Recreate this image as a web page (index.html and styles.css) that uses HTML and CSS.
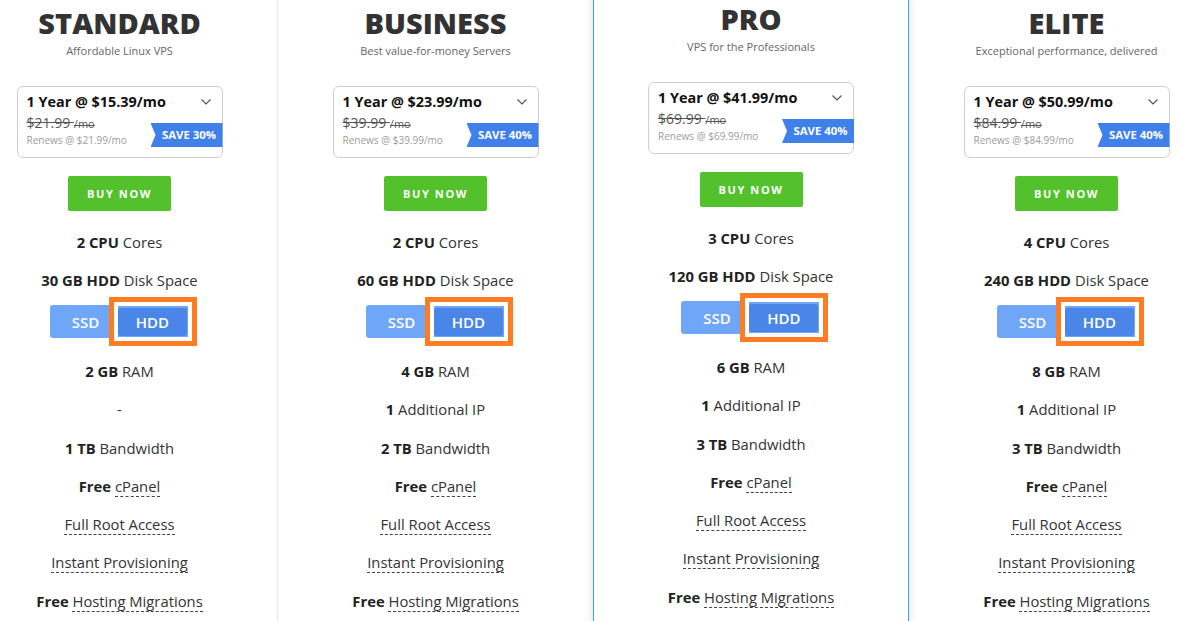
FILE: index.html
```html
<!DOCTYPE html>
<html lang="en">
<head>
<meta charset="utf-8">
<title>VPS Plans</title>
<link rel="stylesheet" href="styles.css">
</head>
<body>
<div class="plans">
  <section class="plan">
    <h2 class="plan-title">STANDARD</h2>
    <p class="plan-sub">Affordable Linux VPS</p>
    <div class="price-box">
      <div class="term">1 Year @ $15.39/mo</div>
      <svg class="chev" width="10" height="6" viewBox="0 0 10 6"><polyline points="0.5,0.5 5,5 9.5,0.5"/></svg>
      <div class="old"><s>$21.99 <small>/mo</small></s></div>
      <div class="renew">Renews @ $21.99/mo</div>
      <span class="save">SAVE 30%</span>
    </div>
    <a class="buy" href="#">BUY NOW</a>
    <ul class="features">
      <li><b>2 CPU</b> Cores</li>
      <li><b>30 GB HDD</b> Disk Space</li>
      <li class="toggle-row"><div class="toggle"><span class="opt">SSD</span><span class="opt active">HDD<span class="mark"></span></span></div></li>
      <li><b>2 GB</b> RAM</li>
      <li>-</li>
      <li><b>1 TB</b> Bandwidth</li>
      <li><b>Free</b> <span class="dotted">cPanel</span></li>
      <li><span class="dotted">Full Root Access</span></li>
      <li><span class="dotted">Instant Provisioning</span></li>
      <li><b>Free</b> <span class="dotted">Hosting Migrations</span></li>
    </ul>
  </section>
  <section class="plan">
    <h2 class="plan-title">BUSINESS</h2>
    <p class="plan-sub">Best value-for-money Servers</p>
    <div class="price-box">
      <div class="term">1 Year @ $23.99/mo</div>
      <svg class="chev" width="10" height="6" viewBox="0 0 10 6"><polyline points="0.5,0.5 5,5 9.5,0.5"/></svg>
      <div class="old"><s>$39.99 <small>/mo</small></s></div>
      <div class="renew">Renews @ $39.99/mo</div>
      <span class="save">SAVE 40%</span>
    </div>
    <a class="buy" href="#">BUY NOW</a>
    <ul class="features">
      <li><b>2 CPU</b> Cores</li>
      <li><b>60 GB HDD</b> Disk Space</li>
      <li class="toggle-row"><div class="toggle"><span class="opt">SSD</span><span class="opt active">HDD<span class="mark"></span></span></div></li>
      <li><b>4 GB</b> RAM</li>
      <li><b>1</b> Additional IP</li>
      <li><b>2 TB</b> Bandwidth</li>
      <li><b>Free</b> <span class="dotted">cPanel</span></li>
      <li><span class="dotted">Full Root Access</span></li>
      <li><span class="dotted">Instant Provisioning</span></li>
      <li><b>Free</b> <span class="dotted">Hosting Migrations</span></li>
    </ul>
  </section>
  <section class="plan featured">
    <h2 class="plan-title">PRO</h2>
    <p class="plan-sub">VPS for the Professionals</p>
    <div class="price-box">
      <div class="term">1 Year @ $41.99/mo</div>
      <svg class="chev" width="10" height="6" viewBox="0 0 10 6"><polyline points="0.5,0.5 5,5 9.5,0.5"/></svg>
      <div class="old"><s>$69.99 <small>/mo</small></s></div>
      <div class="renew">Renews @ $69.99/mo</div>
      <span class="save">SAVE 40%</span>
    </div>
    <a class="buy" href="#">BUY NOW</a>
    <ul class="features">
      <li><b>3 CPU</b> Cores</li>
      <li><b>120 GB HDD</b> Disk Space</li>
      <li class="toggle-row"><div class="toggle"><span class="opt">SSD</span><span class="opt active">HDD<span class="mark"></span></span></div></li>
      <li><b>6 GB</b> RAM</li>
      <li><b>1</b> Additional IP</li>
      <li><b>3 TB</b> Bandwidth</li>
      <li><b>Free</b> <span class="dotted">cPanel</span></li>
      <li><span class="dotted">Full Root Access</span></li>
      <li><span class="dotted">Instant Provisioning</span></li>
      <li><b>Free</b> <span class="dotted">Hosting Migrations</span></li>
    </ul>
  </section>
  <section class="plan">
    <h2 class="plan-title">ELITE</h2>
    <p class="plan-sub">Exceptional performance, delivered</p>
    <div class="price-box">
      <div class="term">1 Year @ $50.99/mo</div>
      <svg class="chev" width="10" height="6" viewBox="0 0 10 6"><polyline points="0.5,0.5 5,5 9.5,0.5"/></svg>
      <div class="old"><s>$84.99 <small>/mo</small></s></div>
      <div class="renew">Renews @ $84.99/mo</div>
      <span class="save">SAVE 40%</span>
    </div>
    <a class="buy" href="#">BUY NOW</a>
    <ul class="features">
      <li><b>4 CPU</b> Cores</li>
      <li><b>240 GB HDD</b> Disk Space</li>
      <li class="toggle-row"><div class="toggle"><span class="opt">SSD</span><span class="opt active">HDD<span class="mark"></span></span></div></li>
      <li><b>8 GB</b> RAM</li>
      <li><b>1</b> Additional IP</li>
      <li><b>3 TB</b> Bandwidth</li>
      <li><b>Free</b> <span class="dotted">cPanel</span></li>
      <li><span class="dotted">Full Root Access</span></li>
      <li><span class="dotted">Instant Provisioning</span></li>
      <li><b>Free</b> <span class="dotted">Hosting Migrations</span></li>
    </ul>
  </section>
</div>
</body>
</html>
```

FILE: styles.css
```css
html, body {
  margin: 0;
  padding: 0;
  background: #fff;
  overflow: hidden;
}
body {
  font-family: "Open Sans", "Noto Sans", "Liberation Sans", sans-serif;
  color: #333;
}
.plans {
  display: flex;
  align-items: flex-start;
  margin-left: -38px;
  width: 1300px;
}
.plan {
  flex: 0 0 316px;
  box-sizing: border-box;
  border-right: 1px solid #e6e6e6;
  display: flex;
  flex-direction: column;
  align-items: center;
  text-align: center;
  background: #fff;
  padding-top: 5px;
  min-height: 640px;
}
.plan.featured {
  margin-left: -1px;
  margin-top: -4px;
  border: 1px solid #3da2f2;
  border-top: 0;
  box-shadow: 0 0 9px rgba(0, 0, 0, 0.13);
  position: relative;
  z-index: 1;
}
.plan-title {
  margin: 0;
  font-size: 29px;
  line-height: 36px;
  font-weight: 800;
  color: #333;
}
.plan-sub {
  margin: 2px 0 0;
  font-size: 11px;
  line-height: 15px;
  color: #666;
}
.price-box {
  position: relative;
  box-sizing: border-box;
  width: 206px;
  height: 72px;
  margin-top: 28px;
  border: 1px solid #cfcfcf;
  border-radius: 6px;
  padding: 5px 0 0 9px;
  text-align: left;
}
.term {
  font-size: 14.4px;
  line-height: 19px;
  font-weight: 700;
  color: #111;
}
.chev {
  position: absolute;
  right: 11px;
  top: 12px;
  fill: none;
  stroke: #555;
  stroke-width: 1.2;
}
.old {
  margin-top: 2px;
  font-size: 14px;
  line-height: 19px;
  color: #555;
}
.old small {
  font-size: 11px;
}
.renew {
  font-size: 10px;
  line-height: 14px;
  color: #9c9c9c;
}
.save {
  position: absolute;
  right: -1px;
  top: 36px;
  width: 72px;
  height: 24px;
  box-sizing: border-box;
  padding-left: 5px;
  background: #3f80ea;
  color: #fff;
  font-size: 11.4px;
  font-weight: 700;
  line-height: 24px;
  text-align: center;
  white-space: nowrap;
  clip-path: polygon(0 0, 100% 0, 100% 100%, 0 100%, 5px 50%);
}
.buy {
  display: block;
  margin-top: 18px;
  width: 103px;
  height: 35px;
  line-height: 35px;
  background: #53c12c;
  color: #fff;
  font-size: 11px;
  font-weight: 700;
  letter-spacing: 1.6px;
  text-decoration: none;
  border-radius: 2px;
}
.features {
  list-style: none;
  margin: 12px 0 0;
  padding: 0;
  font-size: 14.8px;
  line-height: 38.25px;
  color: #333;
}
.features b {
  font-weight: 700;
  color: #222;
}
.dotted {
  border-bottom: 1px dashed #444;
}
.toggle-row {
  line-height: normal;
  display: flex;
  justify-content: center;
  padding: 5px 0 14.5px;
}
.toggle {
  display: flex;
  padding: 3px 2px 2px 3px;
  background: #6fa6f7;
  border-radius: 3px;
}
.opt {
  position: relative;
  width: 65px;
  height: 28px;
  line-height: 28px;
  color: #fff;
  font-size: 15px;
  font-weight: 600;
  text-align: center;
  border-radius: 3px;
}
.opt.active {
  width: 69px;
  background: #4a86e8;
}
.mark {
  position: absolute;
  top: -11px;
  left: -9px;
  right: -10px;
  bottom: -10px;
  border: 5px solid #ff7d22;
  box-shadow: inset 0 0 0 4px #fff;
}
```
